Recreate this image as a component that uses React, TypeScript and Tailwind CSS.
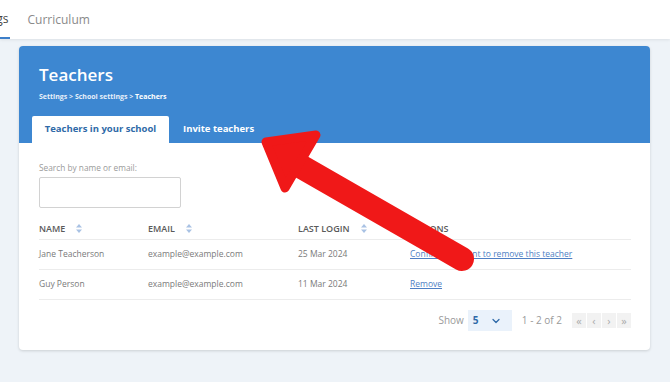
import { ChevronDown } from 'lucide-react';

function SortIcon() {
  return (
    <svg width="6" height="9" viewBox="0 0 6 9" className="ml-[11px] inline-block">
      <path d="M3 0 L6 3.5 H0 Z" fill="#a9c2e4" />
      <path d="M3 9 L6 5.5 H0 Z" fill="#a9c2e4" />
    </svg>
  );
}

const rows = [
  { name: 'Jane Teacherson', email: 'example@example.com', login: '25 Mar 2024', action: 'Confirm you want to remove this teacher' },
  { name: 'Guy Person', email: 'example@example.com', login: '11 Mar 2024', action: 'Remove' },
];

export default function App() {
  return (
    <div className="relative w-[670px] h-[382px] overflow-hidden bg-[#eef3f8] font-['Open_Sans',sans-serif]">
      <div className="h-[39px] bg-white shadow-[0_1px_3px_rgba(0,0,0,0.08)] flex items-stretch overflow-hidden">
        <div className="-ml-[36px] flex items-center border-b-2 border-[#3d7fc9] text-[12px] text-[#444] pr-[1px]">Settings</div>
        <div className="ml-[18px] flex items-center text-[12px] text-[#8a8a8a]">Curriculum</div>
      </div>

      <div className="mt-[7px] ml-[19px] w-[631px] h-[304px] rounded-[4px] bg-white shadow-[0_1px_3px_rgba(0,0,0,0.15)] overflow-hidden">
        <div className="bg-[#3d87d1] h-[97px] pt-[17px] flex flex-col">
          <div className="pl-[20px] text-[17px] leading-[24px] font-semibold text-white">Teachers</div>
          <div className="pl-[20px] mt-[5px] text-[7px] leading-[10px] font-bold text-[#e6effa]">
            Settings &gt; School settings &gt; <span className="text-white">Teachers</span>
          </div>
          <div className="mt-auto pl-[13px] flex items-end">
            <div className="w-[137px] h-[27px] bg-white rounded-t-[2px] flex items-center justify-center text-[9.5px] font-bold text-[#2f6aa8]">Teachers in your school</div>
            <div className="ml-[14px] h-[27px] flex items-center text-[9.5px] font-bold text-white">Invite teachers</div>
          </div>
        </div>

        <div className="px-[20px] pt-[20px]">
          <div className="text-[8.3px] leading-[10px] text-[#9a9a9a]">Search by name or email:</div>
          <div className="mt-[4px] w-[142px] h-[31px] border border-[#d2d2d2] rounded-[2px]" />

          <div className="mt-[8px] w-[592px]">
            <div className="flex h-[23px] items-start pt-[6px] text-[9px] font-semibold text-[#5a5a5a]">
              <div className="w-[109px] flex items-center">NAME<SortIcon /></div>
              <div className="w-[150px] flex items-center">EMAIL<SortIcon /></div>
              <div className="w-[112px] flex items-center">LAST LOGIN<SortIcon /></div>
              <div className="flex items-center">ACTIONS</div>
            </div>
            {rows.map((r) => (
              <div key={r.name} className="flex h-[30px] items-center border-t border-[#ececec] text-[8.5px] text-[#7a7a7a]">
                <div className="w-[109px]">{r.name}</div>
                <div className="w-[150px]">{r.email}</div>
                <div className="w-[112px]">{r.login}</div>
                <div className="text-[#4f7fc4] underline">{r.action}</div>
              </div>
            ))}
            <div className="border-t border-[#ececec]" />
          </div>

          <div className="mt-[10px] w-[592px] flex items-center justify-end text-[10px] text-[#9a9a9a]">
            <span>Show</span>
            <div className="ml-[4px] w-[44px] h-[21px] bg-[#eaf2fb] flex items-center justify-between pl-[5px] pr-[10px]">
              <span className="font-bold text-[#2f6aa8]">5</span>
              <ChevronDown size={12} strokeWidth={2.5} className="text-[#2f6aa8]" />
            </div>
            <span className="ml-[10px]">1 - 2 of 2</span>
            <div className="ml-[10px] flex gap-[1px]">
              {['«', '‹', '›', '»'].map((g, i) => (
                <div key={i} className="w-[14px] h-[15px] bg-[#f2f2f2] flex items-center justify-center text-[11px] leading-none text-[#aaaaaa]">
                  {g}
                </div>
              ))}
            </div>
          </div>
        </div>
      </div>

      <svg className="absolute left-0 top-0 pointer-events-none" width="670" height="382" viewBox="0 0 670 382">
        <line x1="300" y1="166" x2="462" y2="259" stroke="#f01818" strokeWidth="24" strokeLinecap="round" />
        <polygon points="266,142 316,135 285,188" fill="#f01818" stroke="#f01818" strokeWidth="9" strokeLinejoin="round" />
      </svg>
    </div>
  );
}
